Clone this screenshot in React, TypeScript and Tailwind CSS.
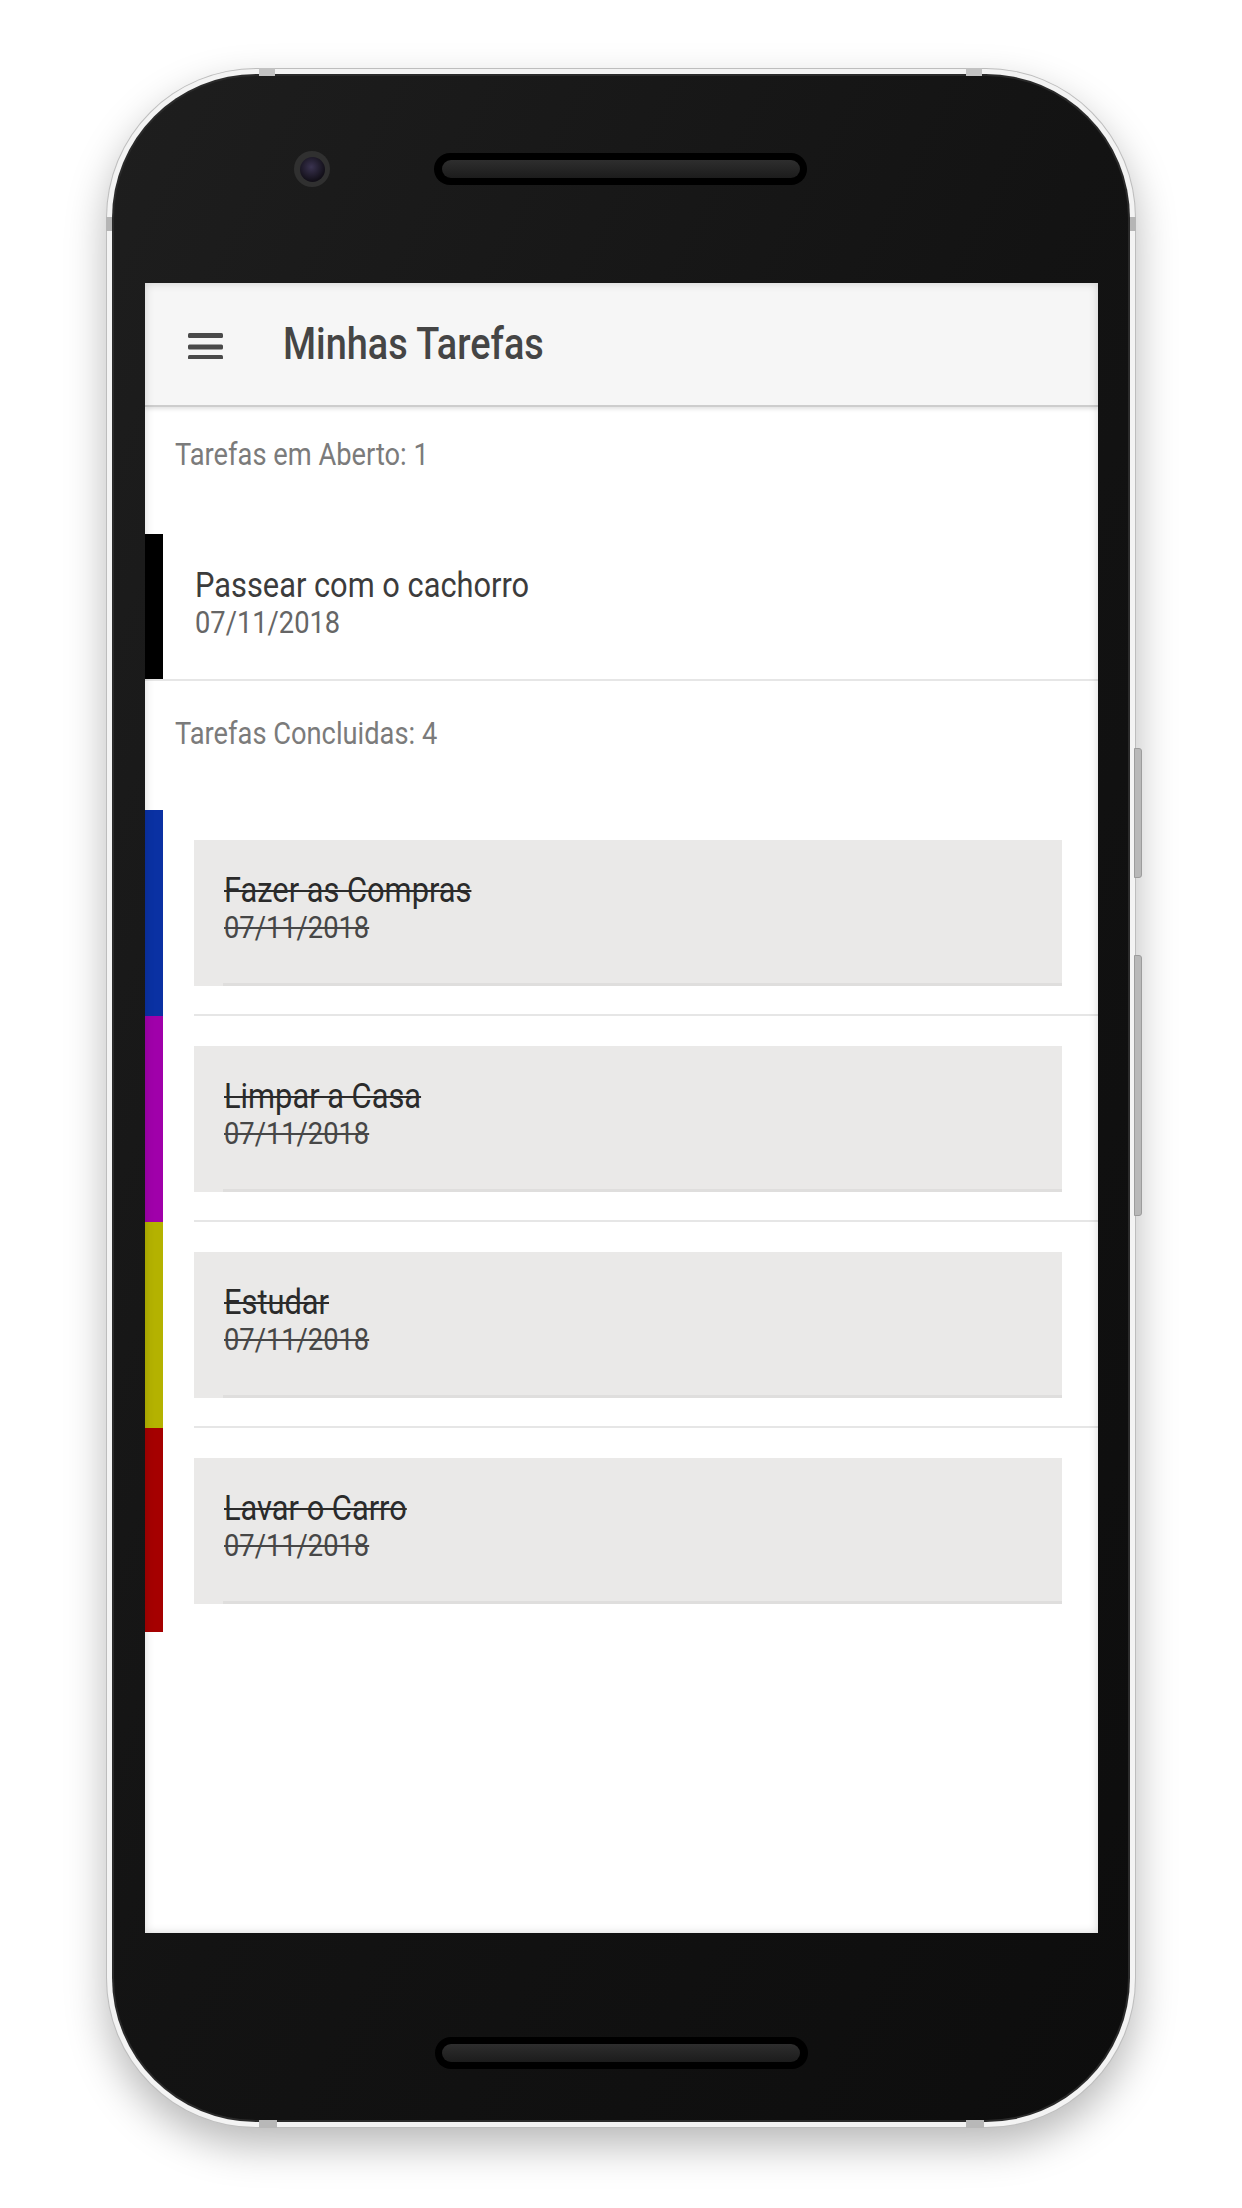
import React from "react";

const done = [
  { title: "Fazer as Compras", bar: "bg-[#0a31a3]" },
  { title: "Limpar a Casa", bar: "bg-[#a000aa]" },
  { title: "Estudar", bar: "bg-[#b4b200]" },
  { title: "Lavar o Carro", bar: "bg-[#a50000]" },
];

// the app screenshot is squeezed sideways inside the mockup
function Squeezed({
  children,
  className = "",
  tight = false,
}: {
  children: React.ReactNode;
  className?: string;
  tight?: boolean;
}) {
  return (
    <span
      className={`inline-block origin-left whitespace-nowrap ${tight ? "scale-x-[0.86]" : "scale-x-[0.88]"} ${className}`}
    >
      {children}
    </span>
  );
}

function MenuIcon() {
  return (
    <svg width="35" height="30" viewBox="0 0 35 30" className="shrink-0">
      <rect x="0" y="4" width="35" height="5" rx="1.5" fill="#4a4a4a" />
      <rect x="0" y="15.5" width="35" height="5" rx="1.5" fill="#4a4a4a" />
      <rect x="0" y="26" width="35" height="4.5" rx="1.5" fill="#4a4a4a" />
    </svg>
  );
}

function SectionHeader({ label, className }: { label: string; className: string }) {
  return (
    <div className={`pl-[30px] ${className}`}>
      <Squeezed className="text-[31px] leading-[40px] text-[#7b7b7b]">{label}</Squeezed>
    </div>
  );
}

function Speaker() {
  return (
    <div className="flex h-[32px] w-[373px] items-center justify-center rounded-full bg-black">
      <div className="h-[18px] w-[358px] rounded-full bg-gradient-to-b from-[#2e2e2e] to-[#1c1c1c]" />
    </div>
  );
}

function Screen() {
  return (
    <div className="relative flex h-[1650px] w-[953px] flex-col overflow-hidden bg-white">
      <header className="flex h-[124px] shrink-0 items-center border-b-2 border-[#cdcdcd] bg-[#f6f6f6] pl-[43px] shadow-[0_2px_4px_rgba(0,0,0,0.12)]">
        <MenuIcon />
        <Squeezed tight className="ml-[60px] text-[44px] font-medium leading-none text-[#454545]">
          Minhas Tarefas
        </Squeezed>
      </header>

      <SectionHeader label="Tarefas em Aberto: 1" className="pt-[28px] pb-[59px]" />

      <div className="flex h-[147px] border-b-2 border-[#e6e6e6]">
        <div className="w-[18px] bg-black" />
        <div className="flex flex-col justify-center pb-[6px] pl-[32px]">
          <Squeezed className="text-[35px] leading-[39px] text-[#3c3c3c]">Passear com o cachorro</Squeezed>
          <Squeezed className="text-[31px] leading-[36px] text-[#666666]">07/11/2018</Squeezed>
        </div>
      </div>

      <SectionHeader label="Tarefas Concluidas: 4" className="pt-[33px] pb-[56px]" />

      {done.map((t, i) => (
        <div key={t.title} className="flex">
          <div className={`w-[18px] ${t.bar}`} />
          <div className="flex-1 pl-[31px]">
            <div className="pt-[30px] pr-[36px] pb-[28px]">
              <div className="flex h-[146px] flex-col bg-[#eae9e8]">
                <div className="flex flex-1 flex-col pt-[31px] pl-[30px]">
                  <Squeezed className="text-[35px] leading-[39px] text-[#2b2b2b] line-through decoration-2">
                    {t.title}
                  </Squeezed>
                  <Squeezed className="text-[31px] leading-[36px] text-[#474747] line-through decoration-2">
                    07/11/2018
                  </Squeezed>
                </div>
                <div className="ml-[29px] h-[3px] bg-[#dfdedd]" />
              </div>
            </div>
            {i < done.length - 1 && <div className="h-[2px] bg-[#e6e6e6]" />}
          </div>
        </div>
      ))}

      <div className="pointer-events-none absolute inset-0 shadow-[inset_0_0_10px_rgba(0,0,0,0.16)]" />
    </div>
  );
}

export default function App() {
  return (
    <div className="min-h-[2208px] w-[1242px] bg-white pt-[68px] font-[family-name:Roboto,sans-serif]">
      <div className="relative mx-auto h-[2060px] w-[1030px] rounded-[150px] bg-[#bdbdbd] p-[1px] shadow-[0_18px_40px_rgba(0,0,0,0.28)]">
        {/* frame notches */}
        <div className="absolute top-0 left-[153px] h-[8px] w-[16px] bg-[#c2c2c2]" />
        <div className="absolute top-0 left-[860px] h-[8px] w-[16px] bg-[#c2c2c2]" />
        <div className="absolute bottom-0 left-[153px] h-[8px] w-[18px] bg-[#b8b8b8]" />
        <div className="absolute bottom-0 left-[860px] h-[8px] w-[18px] bg-[#b8b8b8]" />
        <div className="absolute top-[149px] left-0 h-[14px] w-[6px] bg-[#b5b5b5]" />
        <div className="absolute top-[149px] right-0 h-[14px] w-[6px] bg-[#b5b5b5]" />
        {/* side buttons */}
        <div className="absolute top-[680px] left-[1028px] h-[130px] w-[8px] rounded-r-[3px] border border-[#9c9c9c] bg-[#b8b8b8]" />
        <div className="absolute top-[887px] left-[1028px] h-[261px] w-[8px] rounded-r-[3px] border border-[#9c9c9c] bg-[#b8b8b8]" />

        <div className="h-full rounded-[149px] bg-[#f3f3f3] p-[5px]">
          <div className="h-full rounded-[144px] bg-[#2a2a2a] p-[2px]">
            <div className="flex h-full flex-col items-center rounded-[142px] bg-gradient-to-br from-[#1e1e1e] via-[#131313] to-[#0d0d0d] px-[30px] pt-[75px]">
              <div className="flex w-full items-center pl-[150px]">
                <div className="flex h-[36px] w-[36px] items-center justify-center rounded-full bg-[#303030]">
                  <div className="h-[25px] w-[25px] rounded-full bg-[radial-gradient(circle_at_45%_40%,#3a3350,#120f18_70%)]" />
                </div>
                <div className="ml-[104px]">
                  <Speaker />
                </div>
              </div>
              <div className="mt-[96px]">
                <Screen />
              </div>
              <div className="mt-[104px]">
                <Speaker />
              </div>
            </div>
          </div>
        </div>
      </div>
    </div>
  );
}
